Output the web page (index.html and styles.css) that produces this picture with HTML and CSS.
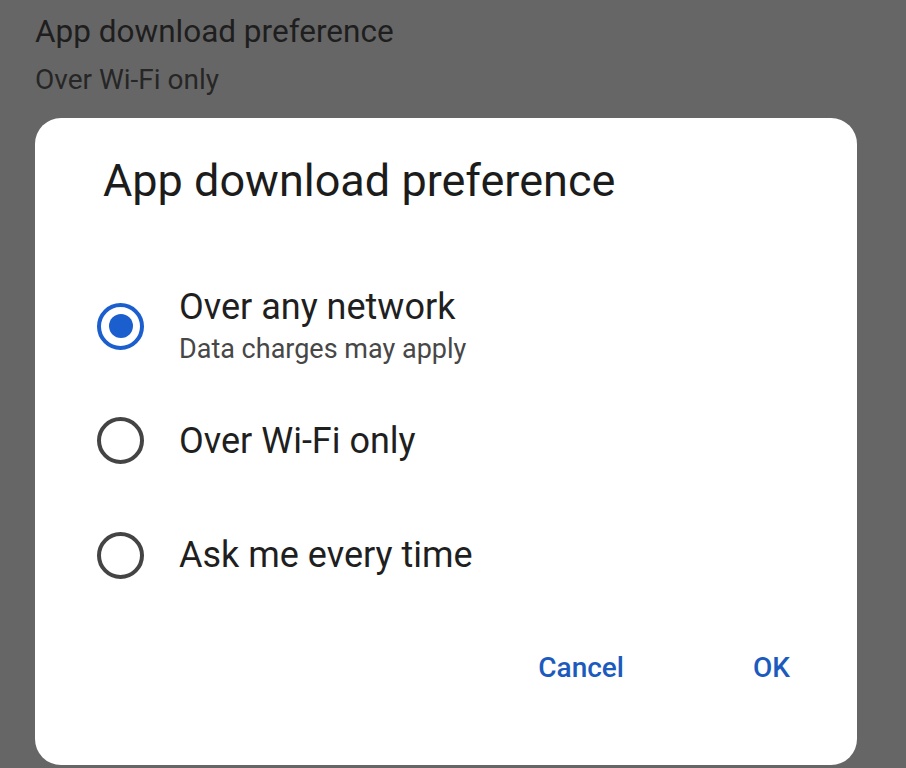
FILE: index.html
```html
<!DOCTYPE html>
<html>
<head>
<meta charset="utf-8">
<link rel="stylesheet" href="styles.css">
</head>
<body>
<div class="screen">
  <div class="setting">
    <div class="setting-title">App download preference</div>
    <div class="setting-value">Over Wi-Fi only</div>
  </div>
  <div class="dialog">
    <h1 class="dialog-title">App download preference</h1>
    <div class="options">
      <div class="option">
        <span class="radio checked"><span class="dot"></span></span>
        <div class="option-text">
          <div class="option-label">Over any network</div>
          <div class="option-sub">Data charges may apply</div>
        </div>
      </div>
      <div class="option">
        <span class="radio"></span>
        <div class="option-text">
          <div class="option-label">Over Wi-Fi only</div>
        </div>
      </div>
      <div class="option">
        <span class="radio"></span>
        <div class="option-text">
          <div class="option-label">Ask me every time</div>
        </div>
      </div>
    </div>
    <div class="actions">
      <span class="btn">Cancel</span>
      <span class="btn">OK</span>
    </div>
  </div>
</div>
</body>
</html>
```
FILE: styles.css
```css
html, body {
  margin: 0;
  padding: 0;
}
body {
  background: #666666;
  font-family: Roboto, "Open Sans", sans-serif;
  width: 906px;
  height: 768px;
  overflow: hidden;
}
.screen {
  display: flex;
  flex-direction: column;
}
.setting {
  padding: 12px 0 0 35px;
  height: 118px;
  box-sizing: border-box;
}
.setting-title {
  font-size: 31.5px;
  line-height: 40px;
  color: #1e1e1e;
}
.setting-value {
  margin-top: 8px;
  font-size: 28px;
  line-height: 40px;
  color: #262626;
}
.dialog {
  margin-left: 35px;
  width: 822px;
  height: 647px;
  background: #ffffff;
  border-radius: 26px;
  box-sizing: border-box;
  padding-top: 38px;
  display: flex;
  flex-direction: column;
}
.dialog-title {
  margin: 0 0 0 68px;
  font-size: 45px;
  font-weight: 400;
  line-height: 50px;
  color: #1c1c1c;
}
.options {
  margin-top: 63px;
  display: flex;
  flex-direction: column;
}
.option {
  display: flex;
  align-items: center;
  height: 114.5px;
  padding-left: 62px;
}
.radio {
  flex: none;
  width: 47px;
  height: 47px;
  box-sizing: border-box;
  border: 4.5px solid #444444;
  border-radius: 50%;
  display: flex;
  align-items: center;
  justify-content: center;
}
.radio.checked {
  border-color: #1b5fcf;
}
.dot {
  width: 24px;
  height: 24px;
  border-radius: 50%;
  background: #1b5fcf;
}
.option-text {
  margin-left: 35px;
}
.option-label {
  font-size: 36px;
  line-height: 44px;
  color: #1f1f1f;
}
.option-sub {
  margin-top: 1px;
  font-size: 27px;
  line-height: 38px;
  color: #474747;
}
.actions {
  display: flex;
  justify-content: flex-end;
  gap: 129px;
  padding-right: 67px;
  margin-top: 35px;
}
.btn {
  font-size: 28px;
  font-weight: 500;
  color: #1c5bbd;
  line-height: 40px;
}
```
